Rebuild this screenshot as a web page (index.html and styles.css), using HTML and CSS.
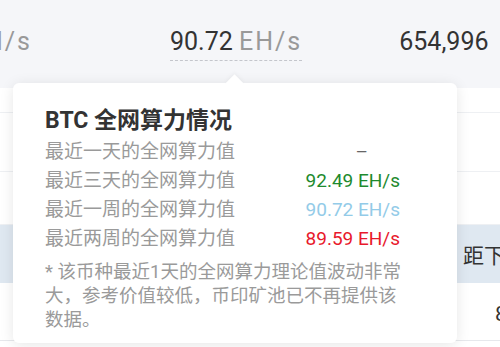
FILE: index.html
```html
<!DOCTYPE html>
<html lang="zh-CN">
<head>
<meta charset="utf-8">
<title>BTC 全网算力</title>
<link rel="stylesheet" href="styles.css">
</head>
<body>
<div class="page">
  <div class="stats">
    <div class="stat stat-first"><span class="num">91.35</span> <span class="unit">EH/s</span></div>
    <div class="stat stat-hash"><span class="num">90.72</span> <span class="unit">EH/s</span></div>
    <div class="stat stat-block"><span class="num">654,996</span></div>
  </div>
  <div class="table">
    <div class="row row-a"></div>
    <div class="row row-b"></div>
    <div class="row row-c"></div>
    <div class="row row-head"><span class="cell-text">距下次难度调整</span></div>
    <div class="row row-d"><span class="cell-num">8 天</span></div>
  </div>

  <div class="tooltip">
    <div class="arrow"></div>
    <div class="tip-title">BTC 全网算力情况</div>
    <div class="tip-rows">
      <div class="tip-label">最近一天的全网算力值</div>
      <div class="tip-value dash">–</div>
      <div class="tip-label">最近三天的全网算力值</div>
      <div class="tip-value green">92.49 EH/s</div>
      <div class="tip-label">最近一周的全网算力值</div>
      <div class="tip-value blue">90.72 EH/s</div>
      <div class="tip-label">最近两周的全网算力值</div>
      <div class="tip-value red">89.59 EH/s</div>
    </div>
    <p class="tip-note">* 该币种最近1天的全网算力理论值波动非常大，参考价值较低，币印矿池已不再提供该数据。</p>
  </div>
</div>
</body>
</html>
```
FILE: styles.css
```css
* { box-sizing: border-box; }
html, body {
  margin: 0;
  padding: 0;
  background: #ffffff;
}
body {
  font-family: Roboto, "Noto Sans CJK SC", "Noto Sans", sans-serif;
  color: #333333;
  width: 500px;
  height: 347px;
  overflow: hidden;
}
.page {
  position: relative;
  width: 500px;
  height: 347px;
  overflow: hidden;
}
.stats {
  height: 88px;
  background: #f5f6f9;
  display: flex;
  align-items: flex-start;
  padding-top: 25px;
  white-space: nowrap;
}
.stat {
  font-size: 25px;
  line-height: 34px;
  flex: none;
}
.stat .num { color: #333333; }
.stat .unit { color: #999999; letter-spacing: 2px; }
.stat-first {
  width: 160px;
  margin-left: -128px;
  text-align: right;
  overflow: hidden;
}
.stat-hash {
  margin-left: 138px;
  border-bottom: 1.5px dashed #c4c6cc;
  padding-bottom: 1px;
}
.stat-block { margin-left: 97px; }

.table {
  display: flex;
  flex-direction: column;
}
.row {
  border-bottom: 1px solid #eef0f3;
  display: flex;
  align-items: center;
  white-space: nowrap;
  overflow: hidden;
}
.row-a { height: 25px; }
.row-b { height: 59px; }
.row-c { height: 53px; }
.row-head {
  height: 58px;
  background: #dfe8f1;
  border-bottom: none;
  padding-left: 463px;
  font-size: 21px;
  color: #333333;
}
.row-d {
  height: 58px;
  padding-left: 495px;
  font-size: 21px;
  color: #333333;
  border-bottom: 1px solid #e6e8ec;
}

.tooltip {
  position: absolute;
  left: 13px;
  top: 83px;
  width: 444px;
  height: 260px;
  background: #ffffff;
  border-radius: 6px;
  box-shadow: 0 2px 14px rgba(0, 0, 0, 0.10);
  padding: 24px 32px 0 32px;
}
.arrow {
  position: absolute;
  left: 215px;
  top: -6px;
  width: 13px;
  height: 13px;
  background: #ffffff;
  transform: rotate(45deg);
  box-shadow: -2px -2px 4px rgba(0, 0, 0, 0.03);
}
.tip-title {
  position: relative;
  font-size: 23px;
  line-height: 28px;
  font-weight: 700;
  color: #333333;
  margin-bottom: 2px;
}
.tip-rows {
  position: relative;
  width: 355px;
  display: grid;
  grid-template-columns: 1fr auto;
  font-size: 19px;
  line-height: 29px;
}
.tip-label { color: #9a9a9a; }
.tip-value { text-align: right; }
.dash { color: #666666; padding-right: 32px; }
.green { color: #1e8a2e; }
.blue { color: #93cbe8; }
.red { color: #e8192c; }
.tip-note {
  position: relative;
  margin: 7px 0 0 0;
  width: 364px;
  font-size: 18.5px;
  line-height: 24px;
  color: #9a9a9a;
}
```
